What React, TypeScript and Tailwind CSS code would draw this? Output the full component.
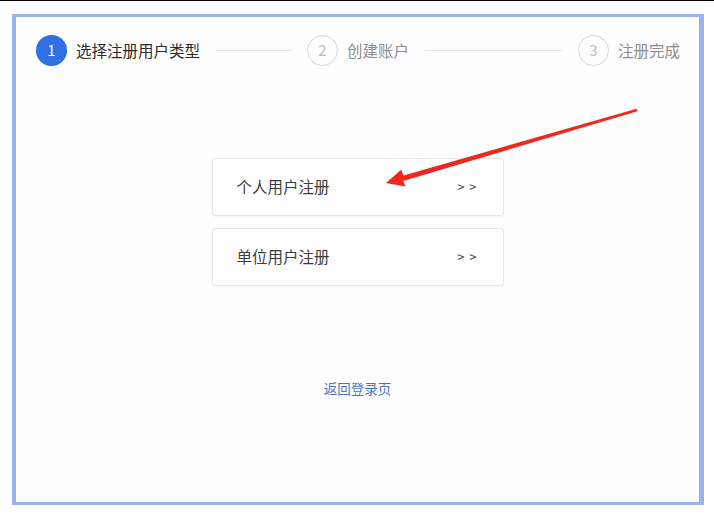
const font = { fontFamily: '"Noto Sans CJK SC", "Noto Sans", sans-serif' };

const steps = [
  { n: 1, title: "选择注册用户类型" },
  { n: 2, title: "创建账户" },
  { n: 3, title: "注册完成" },
];

const options = ["个人用户注册", "单位用户注册"];

function Step({ n, title, active, last }: { n: number; title: string; active: boolean; last: boolean }) {
  return (
    <div className={last ? "flex shrink-0 items-center" : "flex flex-1 items-center"}>
      {active ? (
        <div className="flex h-[31px] w-[31px] shrink-0 items-center justify-center rounded-full bg-[#2f6fe2] text-[15px] text-white">
          {n}
        </div>
      ) : (
        <div className="flex h-[31px] w-[31px] shrink-0 items-center justify-center rounded-full border border-[#d6d6d6] text-[15px] text-[#bdbdbd]">
          {n}
        </div>
      )}
      <span className={active ? "ml-[9px] whitespace-nowrap text-[15.5px] text-[#2b2b2b]" : "ml-[9px] whitespace-nowrap text-[15.5px] text-[#8e8e8e]"}>
        {title}
      </span>
      {!last ? <div className="mx-[16px] h-px flex-1 bg-[#e6e6e6]" /> : null}
    </div>
  );
}

export default function App() {
  return (
    <div className="relative h-[514px] w-[714px] overflow-hidden bg-white" style={font}>
      <div className="h-px w-full bg-black" />
      <div className="ml-[12px] mt-[13px] flex h-[491px] w-[692px] flex-col border-b-[3px] border-l-4 border-r-[5px] border-t-[3px] border-[#98b3f0] bg-[#fefefe]">
        <div className="flex items-center pl-[20px] pr-[19px] pt-[18px]">
          {steps.map((s, i) => (
            <Step key={s.n} n={s.n} title={s.title} active={i === 0} last={i === steps.length - 1} />
          ))}
        </div>

        <div className="mt-[92px] flex flex-col items-center gap-[12px]">
          {options.map((label) => (
            <div
              key={label}
              className="flex h-[58px] w-[292px] items-center justify-between rounded-[3px] border border-[#e6e6e6] bg-white pl-[24px] pr-[25px] shadow-[0_1px_2px_rgba(0,0,0,0.04)]"
            >
              <span className="text-[15.5px] text-[#3c3c3c]">{label}</span>
              <span className="text-[13px] tracking-[1px] text-[#444]">&gt; &gt;</span>
            </div>
          ))}
        </div>

        <div className="mt-[92px] flex justify-center">
          <span className="text-[13.5px] text-[#4a73c6]">返回登录页</span>
        </div>
      </div>

      <svg className="pointer-events-none absolute left-0 top-0" width="714" height="514" viewBox="0 0 714 514">
        <polygon
          points="636.6,108.8 637.4,111.2 403.2,181 405.5,186.5 386,183 401.1,169.8 403.6,175.4"
          fill="#f0271d"
        />
      </svg>
    </div>
  );
}
